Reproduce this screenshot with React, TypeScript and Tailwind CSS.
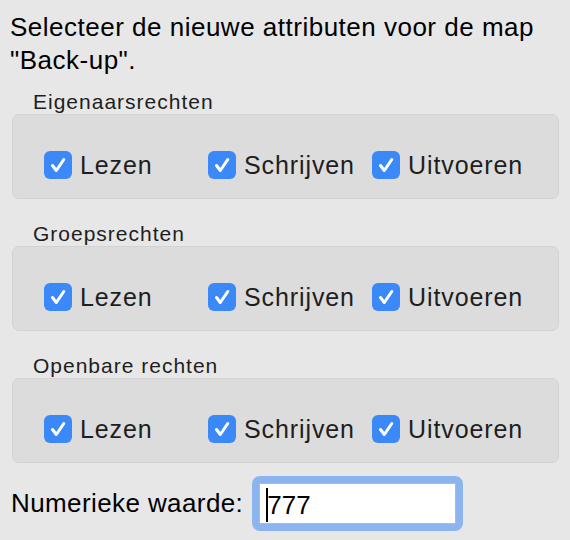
import React from "react";

const font = { fontFamily: '"Liberation Sans", Arial, sans-serif' };

const CheckMark: React.FC = () => (
  <span className="flex h-[28px] w-[28px] shrink-0 items-center justify-center rounded-[6px] bg-[#3b89f8]">
    <svg width="28" height="28" viewBox="0 0 28 28" fill="none">
      <path
        d="M8.5 14.5 L12.3 19.5 L19.8 8.5"
        stroke="white"
        strokeWidth="3"
        strokeLinecap="round"
        strokeLinejoin="round"
      />
    </svg>
  </span>
);

const Option: React.FC<{ label: string }> = ({ label }) => (
  <div className="flex w-[164px] items-center gap-[8px]">
    <CheckMark />
    <span className="mt-[1px] text-[25px] leading-[28px] tracking-[0.9px] text-[#1e1e1e]">
      {label}
    </span>
  </div>
);

const Section: React.FC<{ title: string }> = ({ title }) => (
  <div className="flex flex-col">
    <div className="pl-[33px] text-[21px] leading-[24px] tracking-[1px] text-[#1e1e1e]">
      {title}
    </div>
    <div className="ml-[12px] mr-[11px] h-[85px] rounded-[7px] border border-[#d3d3d3] bg-[#dcdcdc] pl-[31px] pt-[35px]">
      <div className="flex">
        <Option label="Lezen" />
        <Option label="Schrijven" />
        <Option label="Uitvoeren" />
      </div>
    </div>
  </div>
);

export default function App() {
  return (
    <div
      className="flex h-[540px] w-[570px] flex-col overflow-hidden bg-[#e7e7e7] text-black"
      style={font}
    >
      <div className="pl-[10px] pt-[11px] text-[26px] leading-[33px] tracking-[0.5px]">
        Selecteer de nieuwe attributen voor de map
        <br />
        "Back-up".
      </div>

      <div className="mt-[13px] flex flex-col gap-[23px]">
        <Section title="Eigenaarsrechten" />
        <Section title="Groepsrechten" />
        <Section title="Openbare rechten" />
      </div>

      <div className="mt-[13px] flex items-center gap-[9px] pl-[11px]">
        <span className="text-[26px] leading-[29px] tracking-[0.4px]">
          Numerieke waarde:
        </span>
        <div className="h-[55px] w-[211px] rounded-[8px] border-[7px] border-[#8cb5f0]">
          <div className="relative flex h-full items-center border border-[#b9b9b9] bg-white pl-[7px]">
            <span className="absolute left-[6px] top-[4px] h-[34px] w-[2px] bg-black" />
            <span className="mt-[3px] text-[26px] leading-[29px]">777</span>
          </div>
        </div>
      </div>
    </div>
  );
}
